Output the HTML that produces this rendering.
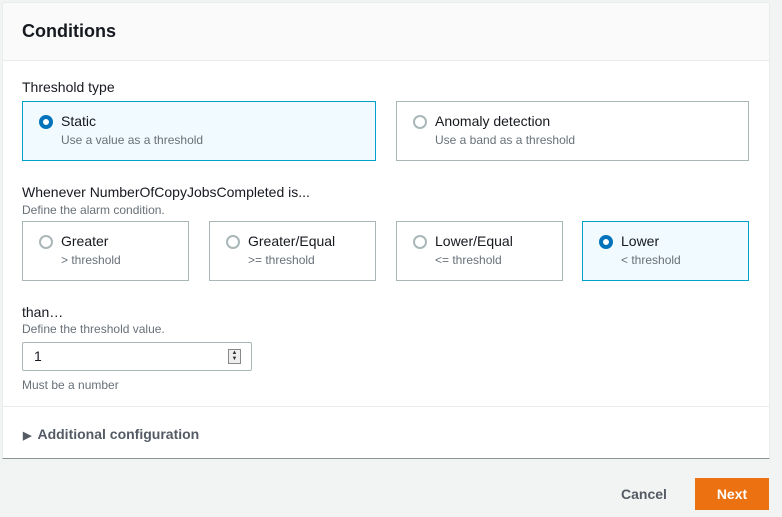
<!DOCTYPE html>
<html><head><style>
*{box-sizing:border-box;margin:0;padding:0}
body{width:782px;height:517px;background:#f2f3f3;font-family:"Liberation Sans",sans-serif;color:#16191f;position:relative;overflow:hidden}
.panel{position:absolute;left:2px;top:2px;width:768px;height:457px;background:#fff;border:1px solid #eaeded;border-bottom:1px solid #879596}
.hdr{height:58px;background:#fafafa;border-bottom:1px solid #eaeded;padding:18px 19px;font-size:18px;font-weight:bold}
.abs{position:absolute}
.lbl{font-size:14px}
.desc{font-size:12px;color:#687078}
.card{position:absolute;border:1px solid #aab7b8;background:#fff;height:60px;padding:11px 0 0 38px}
.card.sel{border-color:#00a1c9;background:#f1faff}
.card .t{font-size:14px}
.card .d{font-size:12px;color:#687078;margin-top:4px}
.rad{position:absolute;left:16px;top:13px;width:14px;height:14px;border-radius:50%;border:2px solid #aab7b8;background:#fff}
.sel .rad{border:4px solid #0073bb}
</style></head><body>
<div class="panel">
<div class="hdr">Conditions</div>
<div class="abs lbl" style="left:19px;top:76px">Threshold type</div>
<div class="card sel" style="left:19px;top:98px;width:354px"><div class="rad"></div><div class="t">Static</div><div class="d">Use a value as a threshold</div></div>
<div class="card" style="left:393px;top:98px;width:353px"><div class="rad"></div><div class="t">Anomaly detection</div><div class="d">Use a band as a threshold</div></div>
<div class="abs lbl" style="left:19px;top:181px">Whenever NumberOfCopyJobsCompleted is...</div>
<div class="abs desc" style="left:19px;top:200px">Define the alarm condition.</div>
<div class="card" style="left:19px;top:218px;width:167px"><div class="rad"></div><div class="t">Greater</div><div class="d">&gt; threshold</div></div>
<div class="card" style="left:206px;top:218px;width:167px"><div class="rad"></div><div class="t">Greater/Equal</div><div class="d">&gt;= threshold</div></div>
<div class="card" style="left:393px;top:218px;width:167px"><div class="rad"></div><div class="t">Lower/Equal</div><div class="d">&lt;= threshold</div></div>
<div class="card sel" style="left:579px;top:218px;width:167px"><div class="rad"></div><div class="t">Lower</div><div class="d">&lt; threshold</div></div>
<div class="abs lbl" style="left:19px;top:301px">than…</div>
<div class="abs desc" style="left:19px;top:319px">Define the threshold value.</div>
<div class="abs" style="left:19px;top:339px;width:230px;height:29px;border:1px solid #aab7b8;border-radius:2px;padding:5px 11px;font-size:14px">1
<div class="abs" style="right:10px;top:6px;width:13px;height:15px;border:1px solid #888;background:#eee;font-size:6px;line-height:6px;text-align:center;color:#333">▲<br>▼</div></div>
<div class="abs desc" style="left:19px;top:375px">Must be a number</div>
<div class="abs" style="left:0;top:403px;width:766px;border-top:1px solid #eaeded"></div>
<div class="abs" style="left:20px;top:423px;font-size:14px;font-weight:bold;color:#545b64"><span style="font-size:11px;margin-right:6px">▶</span>Additional configuration</div>
</div>
<div class="abs" style="left:621px;top:486px;font-size:14px;font-weight:bold;color:#545b64">Cancel</div>
<div class="abs" style="left:695px;top:478px;width:74px;height:32px;background:#ec7211;color:#fff;font-size:14px;font-weight:bold;text-align:center;line-height:32px">Next</div>
</body></html>
